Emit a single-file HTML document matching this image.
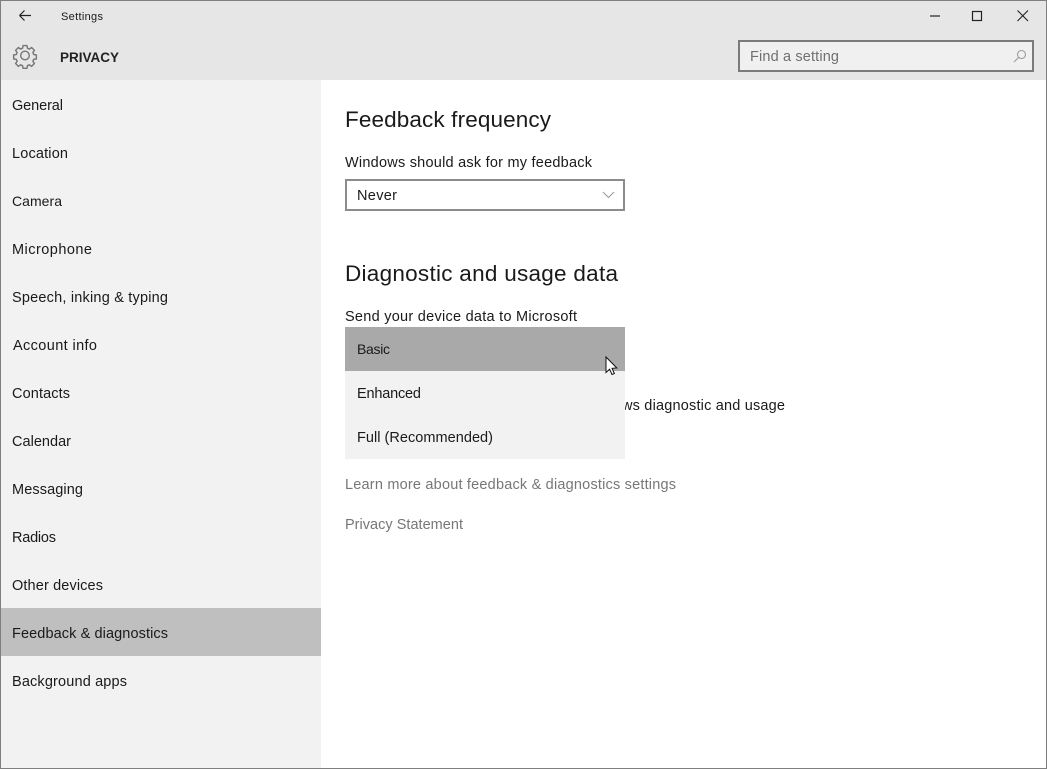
<!DOCTYPE html>
<html>
<head>
<meta charset="utf-8">
<title>Settings</title>
<style>
html,body{margin:0;padding:0;background:#fff;width:1047px;height:769px;overflow:hidden}
svg{display:block}
text{font-family:"Liberation Sans",sans-serif;font-size:14.5px;fill:#1a1a1a}
.m{fill:#777}
</style>
</head>
<body>
<svg width="1047" height="769" viewBox="0 0 1047 769" xmlns="http://www.w3.org/2000/svg">
<rect width="1047" height="769" fill="#fff"/>
<rect x="0" y="0" width="1047" height="80" fill="#e6e6e6"/>
<rect x="1" y="80" width="320" height="688" fill="#f2f2f2"/>
<rect x="1" y="608" width="320" height="48" fill="#bfbfbf"/>
<rect x="0.5" y="0.5" width="1046" height="768" fill="none" stroke="#7f7f7f"/>

<path d="M19.5 15.5H31M19.5 15.5l5-5M19.5 15.5l5 5" fill="none" stroke="#222" stroke-width="1.2"/>
<text x="61" y="20" style="font-size:11px" textLength="42">Settings</text>
<g fill="none" stroke="#777">
<path stroke-width="1.8" d="M22.6 44.8h4.8l.7 3.3 2.3 1 2.9-1.8 3.4 3.4-1.8 2.9 1 2.3 3.3.7v4.8l-3.3.7-1 2.3 1.8 2.9-3.4 3.4-2.9-1.8-2.3 1-.7 3.3h-4.8l-.7-3.3-2.3-1-2.9 1.8-3.4-3.4 1.8-2.9-1-2.3-3.3-.7v-4.8l3.3-.7 1-2.3-1.8-2.9 3.4-3.4 2.9 1.8 2.3-1z" transform="translate(25 55.5) scale(.8) translate(-25 -57.2)"/>
<circle cx="25" cy="55.5" r="4.3" stroke-width="1.4"/>
</g>
<text x="60" y="62" style="font-size:13.5px;font-weight:bold;fill:#222" textLength="59">PRIVACY</text>

<path d="M930 16H940" stroke="#222" stroke-width="1.2"/>
<rect x="972.5" y="11.5" width="9" height="9" fill="none" stroke="#222" stroke-width="1.2"/>
<path d="M1017.5 10.5l10.5 10.5M1028 10.5l-10.5 10.5" stroke="#222" stroke-width="1.1" fill="none"/>

<rect x="739" y="41" width="294" height="30" fill="#f0f0f0" stroke="#7a7a7a" stroke-width="2"/>
<text x="750" y="61" class="m" textLength="89" style="fill:#707070">Find a setting</text>
<g fill="none" stroke="#999" stroke-width="1.1"><circle cx="1021.5" cy="54.5" r="4"/><path d="M1018.5 57.5l-4.5 4.5"/></g>

<text x="12" y="110" textLength="51">General</text>
<text x="12" y="158" textLength="56">Location</text>
<text x="12" y="206" style="font-size:14px" textLength="50">Camera</text>
<text x="12" y="254" textLength="80">Microphone</text>
<text x="12" y="302" textLength="156">Speech, inking &amp; typing</text>
<text x="13" y="350" textLength="84">Account info</text>
<text x="12" y="398" textLength="58">Contacts</text>
<text x="12" y="446" textLength="59">Calendar</text>
<text x="12" y="494" textLength="71">Messaging</text>
<text x="12" y="542" textLength="44">Radios</text>
<text x="12" y="590" textLength="91">Other devices</text>
<text x="12" y="638" textLength="156">Feedback &amp; diagnostics</text>
<text x="12" y="686" textLength="115">Background apps</text>

<text x="345" y="127" style="font-size:22.5px" textLength="206">Feedback frequency</text>
<text x="345" y="167" textLength="247">Windows should ask for my feedback</text>
<rect x="346" y="180" width="278" height="30" fill="#fff" stroke="#8c8c8c" stroke-width="2"/>
<text x="357" y="200" textLength="40">Never</text>
<path d="M603 192l5.5 5.5 5.5-5.5" fill="none" stroke="#999" stroke-width="1"/>

<text x="345" y="281" style="font-size:22.5px" textLength="273">Diagnostic and usage data</text>
<text x="345" y="321" textLength="232">Send your device data to Microsoft</text>

<text x="622" y="410" textLength="163">ws diagnostic and usage</text>
<rect x="345" y="327" width="280" height="44" fill="#a9a9a9"/>
<rect x="345" y="371" width="280" height="88" fill="#f2f2f2"/>
<text x="357" y="354" style="font-size:14px" textLength="33">Basic</text>
<text x="357" y="398" textLength="64">Enhanced</text>
<text x="357" y="442" textLength="136">Full (Recommended)</text>

<text x="345" y="489" class="m" textLength="331">Learn more about feedback &amp; diagnostics settings</text>
<text x="345" y="529" class="m" textLength="118">Privacy Statement</text>

<path d="M606 357v15.5l3.6-3.3 2.4 5.3 2.4-1-2.4-5.2 4.8-.3z" fill="#fff" stroke="#111" stroke-width="1"/>
</svg>
</body>
</html>
